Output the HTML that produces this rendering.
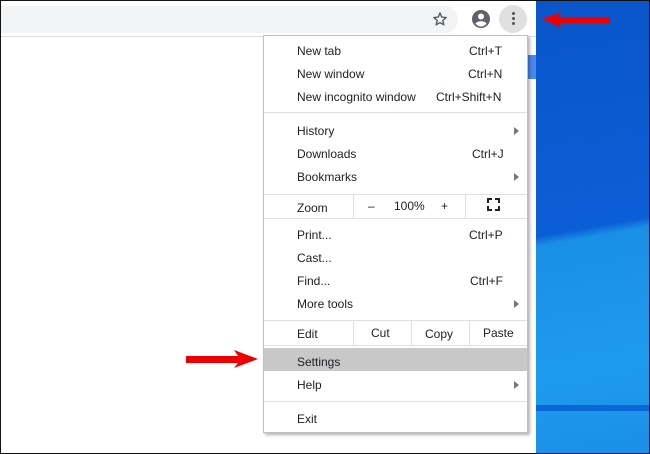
<html><head><style>
body{margin:0;width:650px;height:454px;overflow:hidden;background:#fff;font-family:"Liberation Sans",sans-serif;position:relative}
.abs{position:absolute}
.menu{left:263px;top:35px;width:263px;height:396px;background:#fff;border:1px solid #c0c0c0;box-shadow:2px 2px 3px rgba(0,0,0,.3)}
.t{position:absolute;font-size:12px;color:#202124;white-space:nowrap}
.sep{position:absolute;left:0;width:263px;height:1px;background:#e0e0e0}
.vs{position:absolute;width:1px;background:#e0e0e0}
.tri{position:absolute;width:0;height:0;border-left:5px solid #777;border-top:4px solid transparent;border-bottom:4px solid transparent}
</style></head><body>
<div class="abs" style="left:0;top:0;width:650px;height:454px;border:1px solid #111;box-sizing:border-box;z-index:10;pointer-events:none"></div>
<div class="abs" style="left:536px;top:0;width:114px;height:454px;background:linear-gradient(170deg,#0a55c9 0%,#0b5fd6 50%,#1a8fe6 52%,#1c9bef 80%,#1a8fe6 100%)"></div>
<div class="abs" style="left:536px;top:405px;width:114px;height:6px;background:#0b66d8"></div>
<div class="abs" style="left:0;top:0;width:536px;height:36px;background:#fff;border-bottom:1px solid #ddd"></div>
<div class="abs" style="left:0;top:6px;width:458px;height:27px;background:#f1f3f4;border-radius:0 14px 14px 0"></div>
<svg class="abs" style="left:432px;top:11px" width="16" height="16" viewBox="0 0 24 24"><path d="M12 3l2.6 6.2 6.7.6-5.1 4.4 1.6 6.6L12 17.3 6.2 20.8l1.6-6.6L2.7 9.8l6.7-.6z" fill="none" stroke="#555" stroke-width="2" stroke-linejoin="round"/></svg>
<svg class="abs" style="left:471px;top:9px" width="20" height="20" viewBox="0 0 20 20"><circle cx="10" cy="10" r="9" fill="#5f6368"/><circle cx="10" cy="7.5" r="3" fill="#fff"/><path d="M4.5 14.5c2-3 9-3 11 0c-1.5 2-3.5 3-5.5 3s-4-1-5.5-3z" fill="#fff"/></svg>
<div class="abs" style="left:499px;top:5px;width:28px;height:28px;border-radius:14px;background:#e0e0e0"></div>
<div class="abs" style="left:512px;top:12px;width:3px;height:3px;border-radius:2px;background:#555;box-shadow:0 5px 0 #555,0 10px 0 #555"></div>
<svg class="abs" style="left:540px;top:10px" width="74" height="20"><polygon points="2,9 22,2 18,7 70,7 70,13 18,13 22,18" fill="#e00"/></svg>
<svg class="abs" style="left:186px;top:350px" width="74" height="20"><polygon points="0,6 52,6 48,0 72,9 48,18 52,13 0,13" fill="#e00"/></svg>
<div class="abs" style="left:527px;top:55px;width:9px;height:24px;background:#4a89f0"></div>
<div class="abs menu">
<div class="t" style="left:33px;top:8px">New tab</div><div class="t" style="left:205px;top:8px">Ctrl+T</div>
<div class="t" style="left:33px;top:31px">New window</div><div class="t" style="left:204px;top:31px">Ctrl+N</div>
<div class="t" style="left:33px;top:54px">New incognito window</div><div class="t" style="left:172px;top:54px">Ctrl+Shift+N</div>
<div class="sep" style="top:76px"></div>
<div class="t" style="left:33px;top:88px">History</div><div class="tri" style="left:250px;top:91px"></div>
<div class="t" style="left:33px;top:111px">Downloads</div><div class="t" style="left:208px;top:111px">Ctrl+J</div>
<div class="t" style="left:33px;top:134px">Bookmarks</div><div class="tri" style="left:250px;top:137px"></div>
<div class="sep" style="top:158px"></div>
<div class="t" style="left:33px;top:165px">Zoom</div><div class="vs" style="left:89px;top:158px;height:24px"></div>
<div class="t" style="left:104px;top:163px">–</div><div class="t" style="left:130px;top:163px">100%</div><div class="t" style="left:177px;top:163px">+</div>
<div class="vs" style="left:201px;top:158px;height:24px"></div>
<svg class="abs" style="left:223px;top:162px" width="13" height="13" viewBox="0 0 13 13"><path d="M1 5V1h4M8 1h4v4M12 8v4H8M5 12H1V8" fill="none" stroke="#222" stroke-width="2"/></svg>
<div class="sep" style="top:182px"></div>
<div class="t" style="left:33px;top:192px">Print...</div><div class="t" style="left:205px;top:192px">Ctrl+P</div>
<div class="t" style="left:33px;top:215px">Cast...</div>
<div class="t" style="left:33px;top:238px">Find...</div><div class="t" style="left:206px;top:238px">Ctrl+F</div>
<div class="t" style="left:33px;top:261px">More tools</div><div class="tri" style="left:250px;top:264px"></div>
<div class="sep" style="top:284px"></div>
<div class="t" style="left:33px;top:291px">Edit</div><div class="vs" style="left:89px;top:284px;height:25px"></div>
<div class="t" style="left:107px;top:290px">Cut</div><div class="vs" style="left:147px;top:284px;height:25px"></div>
<div class="t" style="left:161px;top:291px">Copy</div><div class="vs" style="left:205px;top:284px;height:25px"></div>
<div class="t" style="left:219px;top:290px">Paste</div>
<div class="sep" style="top:309px"></div>
<div class="abs" style="left:0;top:312px;width:263px;height:23px;background:#c8c8c8"></div>
<div class="t" style="left:33px;top:319px">Settings</div>
<div class="t" style="left:33px;top:342px">Help</div><div class="tri" style="left:250px;top:345px"></div>
<div class="sep" style="top:365px"></div>
<div class="t" style="left:33px;top:376px">Exit</div>
</div>
</body></html>
